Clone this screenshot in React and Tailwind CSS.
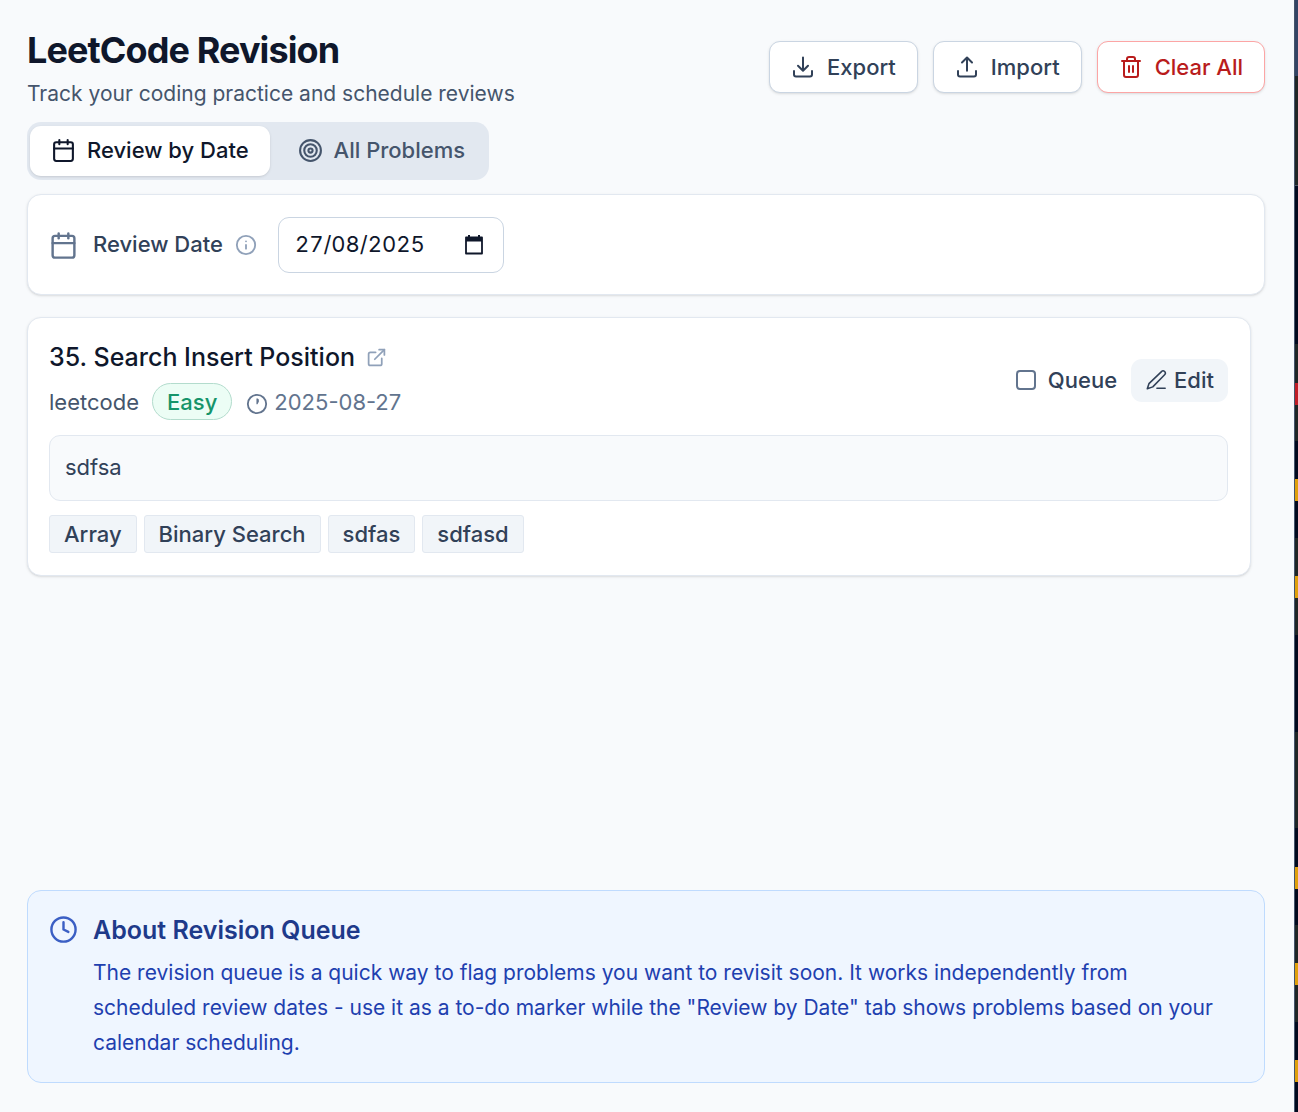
import { useState } from 'react';
import { Calendar, Clock, ExternalLink, Info, Target, Trash2 } from 'lucide-react';

const EDGE_SEGMENTS = [
  { height: 76, color: '#334464' },
  { height: 109, color: '#1f2626' },
  { height: 1, color: '#4b5563' },
  { height: 158, color: '#020a1f' },
  { height: 39, color: '#1f2626' },
  { height: 22, color: '#c01d26' },
  { height: 36, color: '#1f2626' },
  { height: 38, color: '#020a1f' },
  { height: 22, color: '#e0a00c' },
  { height: 37, color: '#020a1f' },
  { height: 38, color: '#1f2626' },
  { height: 22, color: '#e0a00c' },
  { height: 37, color: '#1f2626' },
  { height: 97, color: '#020a1f' },
  { height: 96, color: '#1f2626' },
  { height: 39, color: '#020a1f' },
  { height: 22, color: '#e0a00c' },
  { height: 36, color: '#020a1f' },
  { height: 38, color: '#1f2626' },
  { height: 22, color: '#e0a00c' },
  { height: 37, color: '#1f2626' },
  { height: 38, color: '#020a1f' },
  { height: 22, color: '#e0a00c' },
];

const TAGS = ['Array', 'Binary Search', 'sdfas', 'sdfasd'];

const Icon = ({ size = 24, className = '', children }) => (
  <svg
    className={`shrink-0 ${className}`}
    width={size}
    height={size}
    viewBox="0 0 24 24"
    fill="none"
    stroke="currentColor"
    strokeWidth="2"
    strokeLinecap="round"
    strokeLinejoin="round"
    aria-hidden="true"
  >
    {children}
  </svg>
);

const DownloadIcon = () => (
  <Icon>
    <path d="M12 2.500V15.500M7 10.800l5 5 5-5M3 16v3.500a2 2 0 0 0 2 2h14a2 2 0 0 0 2-2V16" />
  </Icon>
);

const UploadIcon = () => (
  <Icon>
    <path d="M12 15.800V2.500M7 7.500l5-5 5 5M3 16v3.500a2 2 0 0 0 2 2h14a2 2 0 0 0 2-2V16" />
  </Icon>
);

const PenIcon = () => (
  <Icon size={22}>
    <path strokeWidth="1.700" d="M13 21h9M18 2.800a2.400 2.400 0 0 1 3.400 3.400L8.500 19.500 2.500 21.500l1.800-5.500z" />
  </Icon>
);

const SmallClockIcon = () => (
  <Icon size={22} className="mt-1">
    <circle cx="12" cy="12" r="10" />
    <path d="M11.400 6h1.400l1.200 1.200v2.300l-1.500 2.800h-1.100z" fill="currentColor" stroke="none" />
  </Icon>
);

const HeaderButton = ({ danger = false, icon, children }) => (
  <button
    type="button"
    className={`flex h-[52px] items-center gap-3 rounded-[11px] border bg-white px-[21px] text-[22px] font-medium shadow-sm ${
      danger ? 'border-[#fca5a5] text-[#b91c1c]' : 'border-slate-300 text-slate-700'
    }`}
  >
    {icon}
    {children}
  </button>
);

const Header = () => (
  <header className="flex items-center justify-between">
    <div>
      <h1 className="text-[36px] leading-[44px] font-bold tracking-tight text-slate-900">LeetCode Revision</h1>
      <p className="mt-[10px] text-[21px] leading-6 text-slate-600">Track your coding practice and schedule reviews</p>
    </div>
    <div className="flex gap-[15px]">
      <HeaderButton icon={<DownloadIcon />}>Export</HeaderButton>
      <HeaderButton icon={<UploadIcon />}>Import</HeaderButton>
      <HeaderButton danger icon={<Trash2 size={24} />}>Clear All</HeaderButton>
    </div>
  </header>
);

const Tab = ({ selected, icon, onClick, children }) => (
  <button
    type="button"
    role="tab"
    aria-selected={selected}
    onClick={onClick}
    className={`flex h-[50px] items-center gap-[11px] rounded-[11px] px-[21px] pb-0.5 text-[22px] font-medium ${
      selected ? 'bg-white text-slate-900 shadow-sm' : 'text-slate-600'
    }`}
  >
    {icon}
    {children}
  </button>
);

const Tabs = ({ active, onChange }) => (
  <div role="tablist" className="mt-4 flex h-[58px] w-fit items-center gap-[7px] rounded-[14px] bg-slate-200 px-[3px]">
    <Tab selected={active === 'date'} onClick={() => onChange('date')} icon={<Calendar size={25} />}>
      Review by Date
    </Tab>
    <Tab selected={active === 'all'} onClick={() => onChange('all')} icon={<Target size={25} />}>
      All Problems
    </Tab>
  </div>
);

const DateFilter = () => (
  <section className="mt-[14px] flex items-center rounded-[14px] border border-slate-200 bg-white px-[21px] pt-[22px] pb-[21px] shadow-sm">
    <Calendar size={29} className="text-slate-500" />
    <label htmlFor="review-date" className="ml-[15px] pb-0.5 text-[22px] font-medium text-slate-700">Review Date</label>
    <Info size={22} className="ml-3 text-slate-400" />
    <input
      id="review-date"
      type="text"
      defaultValue="27/08/2025"
      className="ml-[21px] h-14 w-[226px] rounded-[11px] border border-slate-300 bg-white px-4 pb-0.5 text-[22px] text-slate-900 tabular-nums"
    />
    <svg className="-ml-[41px]" width="22" height="22" viewBox="0 0 22 22" fill="none" aria-hidden="true">
      <path d="M3 3.500h16v16H3z" stroke="#0f172a" strokeWidth="1.800" strokeLinejoin="round" />
      <path d="M3 3.500h16v4H3zM5 1h2v3H5zM15 1h2v3h-2z" fill="#0f172a" />
    </svg>
  </section>
);

const ProblemCard = () => (
  <article className="mt-[22px] mr-[14px] rounded-[14px] border border-slate-200 bg-white py-[22px] pr-[22px] pl-[21px] shadow-sm">
    <div className="flex items-center justify-between">
      <div>
        <h2 className="flex items-center gap-[11px] text-[25px] leading-[34px] font-medium text-slate-900">
          35. Search Insert Position
          <a href="#problem" aria-label="Open problem" className="text-slate-400">
            <ExternalLink size={21} />
          </a>
        </h2>
        <div className="mt-[9px] flex items-center text-[22px] leading-[30px]">
          <span className="text-slate-600">leetcode</span>
          <span className="ml-[13px] flex h-[37px] items-center rounded-full border border-[#b3dccd] bg-emerald-50 px-[14px] font-medium text-[#15946a]">Easy</span>
          <span className="ml-[14px] flex items-center gap-[6px] text-slate-500">
            <SmallClockIcon />
            2025-08-27
          </span>
        </div>
      </div>
      <div className="flex items-center gap-[14px] text-[22px] font-medium text-slate-700">
        <label className="flex items-center gap-3">
          <input type="checkbox" className="h-5 w-5 appearance-none rounded-[4px] border-2 border-slate-500 bg-white checked:bg-slate-500" />
          Queue
        </label>
        <button type="button" className="flex h-[43px] items-center gap-[7px] rounded-[11px] bg-slate-100 px-[14px]">
          <PenIcon />
          Edit
        </button>
      </div>
    </div>
    <p className="mt-[15px] rounded-[11px] border border-slate-200 bg-slate-50 px-[15px] pt-[15px] pb-[17px] text-[22px] leading-8 text-slate-700">sdfsa</p>
    <ul className="mt-[14px] flex gap-[7px]">
      {TAGS.map(tag => (
        <li key={tag} className="rounded-[3px] border border-slate-200 bg-slate-100 px-[14px] text-[22px] leading-9 font-medium text-slate-700">
          {tag}
        </li>
      ))}
    </ul>
  </article>
);

const AboutQueue = () => (
  <aside className="mt-auto flex items-start gap-[15px] rounded-[14px] border border-[#bfdbfe] bg-blue-50 px-[21px] pt-[21px] pb-[22px]">
    <Clock size={29} className="mt-[3px] shrink-0 text-[#3b5fc4]" />
    <div>
      <h2 className="text-[25px] leading-9 font-semibold text-[#1e3a8a]">About Revision Queue</h2>
      <p className="mt-[7px] pr-3 text-[21px] leading-[35px] text-[#1e40af]">
        The revision queue is a quick way to flag problems you want to revisit soon. It works independently from
        scheduled review dates - use it as a to-do marker while the "Review by Date" tab shows problems based on your
        calendar scheduling.
      </p>
    </div>
  </aside>
);

const EdgeStrip = () => (
  <div className="flex w-1 shrink-0 flex-col border-l border-slate-600 bg-[#020a1f]" aria-hidden="true">
    {EDGE_SEGMENTS.map((segment, index) => (
      <div key={index} style={{ height: segment.height, backgroundColor: segment.color }} />
    ))}
  </div>
);

const App = () => {
  const [tab, setTab] = useState('date');

  return (
    <div className="flex min-h-screen bg-slate-50 font-['Inter',sans-serif]">
      <main className="flex min-w-0 flex-1 flex-col pt-7 pr-[29px] pb-[29px] pl-[27px]">
        <Header />
        <Tabs active={tab} onChange={setTab} />
        <DateFilter />
        <ProblemCard />
        <AboutQueue />
      </main>
      <EdgeStrip />
    </div>
  );
};

export default App;
